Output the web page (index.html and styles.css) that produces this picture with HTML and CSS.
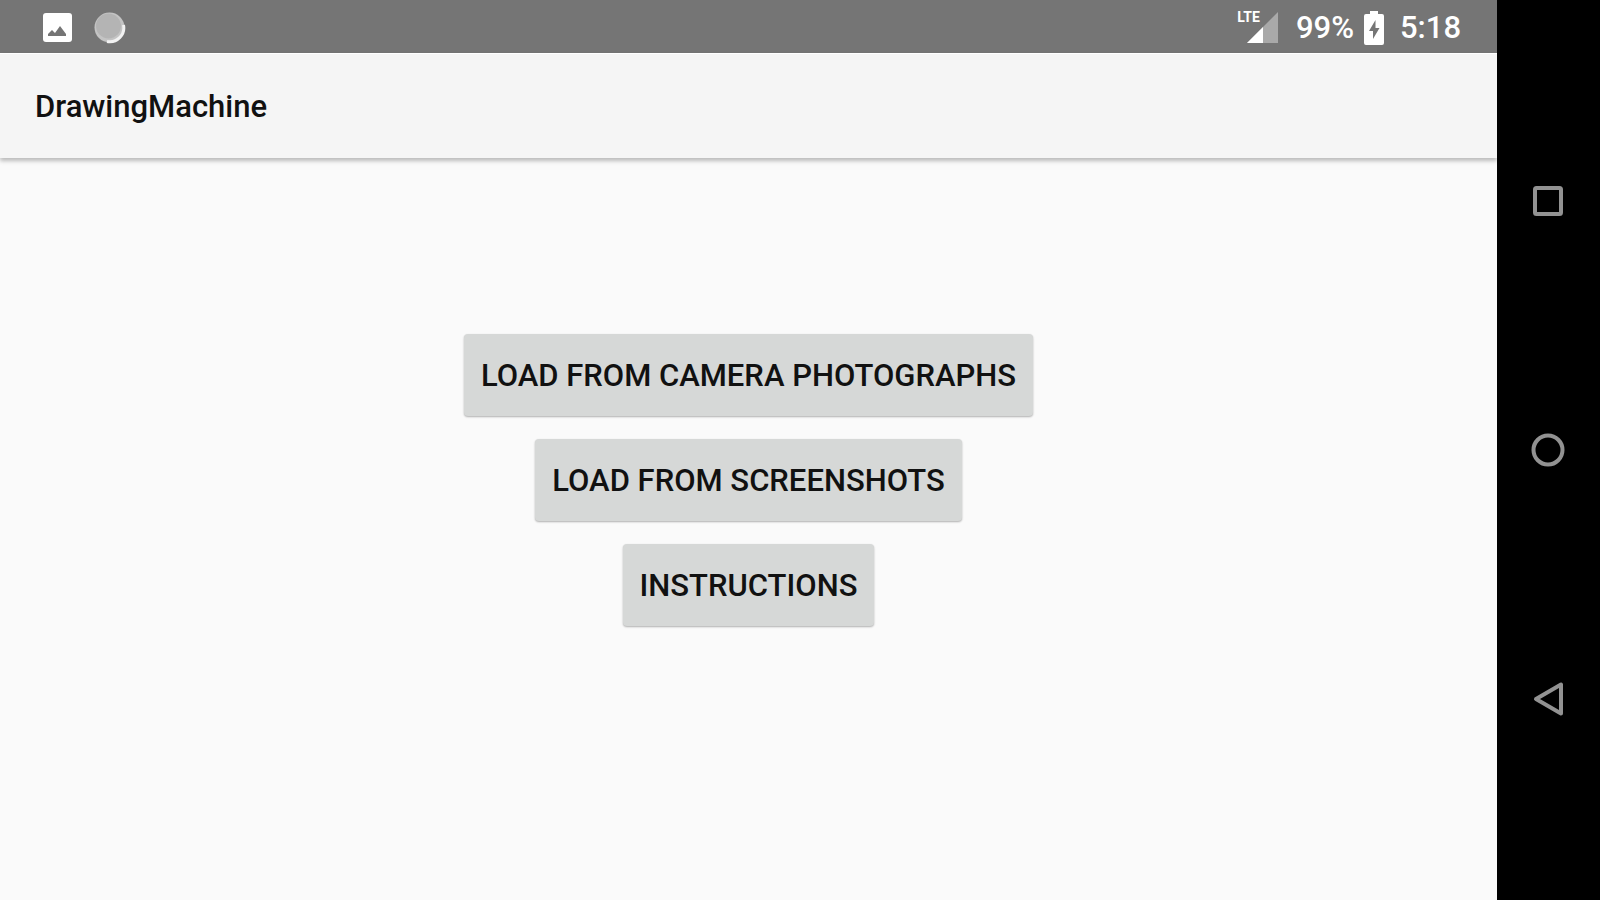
FILE: index.html
```html
<!DOCTYPE html>
<html lang="en">
<head>
<meta charset="utf-8">
<title>DrawingMachine</title>
<link rel="stylesheet" href="styles.css">
</head>
<body>
<div class="device">
  <div class="screen">
    <div class="status-bar">
      <div class="notifications">
        <svg class="icon-picture" width="32" height="32" viewBox="0 0 32 32" aria-hidden="true">
          <rect x="1" y="1" width="29" height="29" rx="3" fill="#fff"/>
          <path d="M6 24v-2l4-4 3 3 5-7 6 8v2z" fill="#757575"/>
        </svg>
        <svg class="icon-sync" width="32" height="32" viewBox="0 0 32 32" aria-hidden="true">
          <circle cx="15.500" cy="15.500" r="15" fill="#c4c4c4"/>
          <path d="M29.500 13A14 14 0 0 1 13 29.500" fill="none" stroke="#f2f2f2" stroke-width="3"/>
          <circle cx="14.500" cy="14" r="12.500" fill="#b4b4b4"/>
        </svg>
      </div>
      <div class="system">
        <span class="signal">
          <svg width="31" height="31" viewBox="0 0 31 31" aria-hidden="true">
            <path d="M0 31L31 0V31z" fill="#a9a9a9"/>
            <path d="M0 31L16 15V31z" fill="#fff"/>
          </svg>
          <span class="network">LTE</span>
        </span>
        <span class="percent">99%</span>
        <svg class="icon-battery" width="20" height="34" viewBox="0 0 20 34" aria-hidden="true">
          <path d="M6 0h8v3h4a2 2 0 0 1 2 2v27a2 2 0 0 1-2 2H2a2 2 0 0 1-2-2V5a2 2 0 0 1 2-2h4z" fill="#fff"/>
          <path d="M11.500 9L5 20h4v8l6.500-11h-4z" fill="#757575"/>
        </svg>
        <time class="clock">5:18</time>
      </div>
    </div>
    <header class="app-bar"><h1 class="title">DrawingMachine</h1></header>
    <main class="content">
      <button class="action" type="button">LOAD FROM CAMERA PHOTOGRAPHS</button>
      <button class="action" type="button">LOAD FROM SCREENSHOTS</button>
      <button class="action" type="button">INSTRUCTIONS</button>
    </main>
  </div>
  <nav class="nav-bar" aria-label="System navigation">
    <button class="nav-button" type="button" aria-label="Recent apps">
      <svg width="36" height="36" viewBox="0 0 36 36"><rect x="4" y="5" width="26" height="26" rx="1.500"/></svg>
    </button>
    <button class="nav-button" type="button" aria-label="Home">
      <svg width="36" height="36" viewBox="0 0 36 36"><circle cx="17" cy="18" r="14.500"/></svg>
    </button>
    <button class="nav-button" type="button" aria-label="Back">
      <svg width="36" height="36" viewBox="0 0 36 36"><path d="M30 3.500V32.500L5 18z"/></svg>
    </button>
  </nav>
</div>
</body>
</html>
```

FILE: styles.css
```css
* {
  box-sizing: border-box;
}

body {
  margin: 0;
  font-family: Roboto, "Liberation Sans", sans-serif;
  background: #fafafa;
}

.device {
  display: flex;
  min-height: 100vh;
}

.screen {
  flex: 1;
  display: flex;
  flex-direction: column;
  background: #fafafa;
}

.status-bar {
  display: flex;
  justify-content: space-between;
  align-items: center;
  height: 53px;
  padding: 2px 36px 0 42px;
  background: #757575;
  color: #fff;
  font-size: 31px;
  font-weight: 500;
}

.notifications,
.system {
  display: flex;
  align-items: center;
}

.notifications {
  gap: 20px;
}

.signal {
  position: relative;
  display: flex;
  margin-right: 18px;
}

.network {
  position: absolute;
  right: 18px;
  top: -3px;
  font-size: 14px;
  line-height: 16px;
  font-weight: 700;
}

.icon-battery {
  margin: 0 16px 0 10px;
}

.app-bar {
  display: flex;
  align-items: center;
  height: 105px;
  padding: 0 35px;
  background: #f5f5f5;
  border-top: 1px solid #fff;
  box-shadow: 0 3px 4px rgba(0, 0, 0, 0.25);
}

.title {
  margin: 0;
  font-size: 31px;
  font-weight: 500;
  color: #111;
}

.content {
  display: flex;
  flex-direction: column;
  align-items: center;
  gap: 23px;
  padding: 176px 24px 24px;
}

.action {
  min-height: 82px;
  padding: 0 17px;
  border: 0;
  border-radius: 4px;
  background: #d6d8d7;
  box-shadow: 0 1px 2px rgba(0, 0, 0, 0.3);
  color: #111;
  font-family: inherit;
  font-size: 31px;
  font-weight: 500;
}

.nav-bar {
  display: flex;
  flex-direction: column;
  width: 103px;
  padding: 76px 0;
  background: #000;
}

.nav-button {
  flex: 1;
  display: flex;
  align-items: center;
  justify-content: center;
  padding: 0;
  border: 0;
  background: transparent;
}

.nav-button svg {
  fill: none;
  stroke: #929292;
  stroke-width: 4;
  stroke-linejoin: round;
}
```
